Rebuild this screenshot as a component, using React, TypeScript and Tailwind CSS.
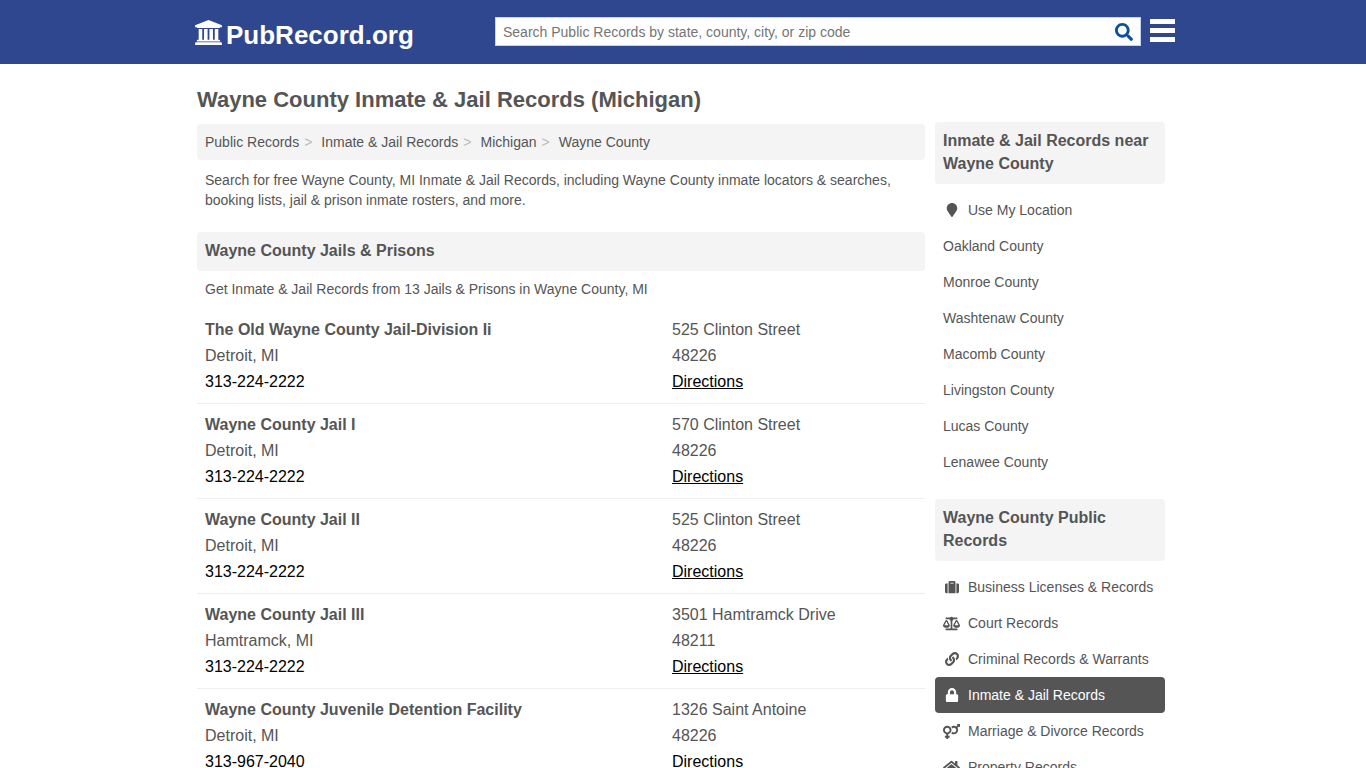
import type { IconType } from "react-icons";
import {
  FaBalanceScale,
  FaHome,
  FaLink,
  FaLock,
  FaMapMarker,
  FaSearch,
  FaSuitcase,
  FaVenusMars,
} from "react-icons/fa";

type Facility = {
  name: string;
  city: string;
  phone: string;
  street: string;
  zip: string;
};

type SideLink = {
  label: string;
  icon?: IconType;
  wide?: boolean;
  active?: boolean;
};

const crumbs = ["Public Records", "Inmate & Jail Records", "Michigan", "Wayne County"];

const facilities: Facility[] = [
  { name: "The Old Wayne County Jail-Division Ii", city: "Detroit, MI", phone: "313-224-2222", street: "525 Clinton Street", zip: "48226" },
  { name: "Wayne County Jail I", city: "Detroit, MI", phone: "313-224-2222", street: "570 Clinton Street", zip: "48226" },
  { name: "Wayne County Jail II", city: "Detroit, MI", phone: "313-224-2222", street: "525 Clinton Street", zip: "48226" },
  { name: "Wayne County Jail III", city: "Hamtramck, MI", phone: "313-224-2222", street: "3501 Hamtramck Drive", zip: "48211" },
  { name: "Wayne County Juvenile Detention Facility", city: "Detroit, MI", phone: "313-967-2040", street: "1326 Saint Antoine", zip: "48226" },
];

const nearby: SideLink[] = [
  { label: "Use My Location", icon: FaMapMarker },
  { label: "Oakland County" },
  { label: "Monroe County" },
  { label: "Washtenaw County" },
  { label: "Macomb County" },
  { label: "Livingston County" },
  { label: "Lucas County" },
  { label: "Lenawee County" },
];

const categories: SideLink[] = [
  { label: "Business Licenses & Records", icon: FaSuitcase },
  { label: "Court Records", icon: FaBalanceScale, wide: true },
  { label: "Criminal Records & Warrants", icon: FaLink },
  { label: "Inmate & Jail Records", icon: FaLock, active: true },
  { label: "Marriage & Divorce Records", icon: FaVenusMars, wide: true },
  { label: "Property Records", icon: FaHome, wide: true },
];

function CourthouseIcon() {
  return (
    <svg viewBox="0 0 1920 1792" className="h-[25px] w-[27px]" fill="currentColor" aria-hidden="true">
      <path d="M960 0l960 384v128h-128q0 26-20.5 45t-48.5 19h-1526q-28 0-48.5-19t-20.5-45h-128v-128zM256 640h256v768h128v-768h256v768h128v-768h256v768h128v-768h256v768h59q28 0 48.5 19t20.5 45v64h-1664v-64q0-26 20.5-45t48.5-19h59v-768zM1851 1600q28 0 48.5 19t20.5 45v128h-1920v-128q0-26 20.5-45t48.5-19h1782z" />
    </svg>
  );
}

function Header() {
  return (
    <header className="bg-[#2e478f]">
      <div className="mx-auto flex h-16 max-w-[984px] items-center justify-between pl-1">
        <a href="#" className="flex items-center gap-1 text-[26px] font-bold leading-8 text-white">
          <CourthouseIcon />
          <span className="pt-[6px]">PubRecord.org</span>
        </a>
        <div className="flex items-center gap-[9px] pb-[2px]">
          <form className="flex h-[29px] w-[646px] items-center border border-[#c5d3ee] bg-white pt-[2px]">
            <input
              type="text"
              aria-label="Search Public Records"
              placeholder="Search Public Records by state, county, city, or zip code"
              className="h-full min-w-0 flex-1 px-[7px] text-sm text-[#555] outline-none placeholder:text-[#757575]"
            />
            <button type="submit" aria-label="Search" className="px-[7px] text-[#0b50a0]">
              <FaSearch className="size-[18px]" />
            </button>
          </form>
          <button type="button" aria-label="Menu" className="flex w-[25px] flex-col gap-1 pb-[2px]">
            <span className="h-[5px] bg-white" />
            <span className="h-[5px] bg-white" />
            <span className="h-[5px] bg-white" />
          </button>
        </div>
      </div>
    </header>
  );
}

function Breadcrumbs() {
  return (
    <nav aria-label="Breadcrumb" className="rounded bg-[#f4f4f4] px-2 py-2">
      <ol className="flex text-sm">
        {crumbs.map((crumb, idx) => (
          <li key={crumb} className="flex">
            <a href="#">{crumb}</a>
            {idx < crumbs.length - 1 && <span className="pl-[5px] pr-[9px] text-[#bbb]">&gt;</span>}
          </li>
        ))}
      </ol>
    </nav>
  );
}

function FacilityRow({ facility }: { facility: Facility }) {
  return (
    <li className="flex border-b border-[#eee] px-2 py-2 text-base leading-[26px]">
      <div className="flex w-[467px] flex-col items-start">
        <a href="#" className="font-bold">
          {facility.name}
        </a>
        <span>{facility.city}</span>
        <a href="#" className="text-black">
          {facility.phone}
        </a>
      </div>
      <div className="flex flex-1 flex-col items-start">
        <span>{facility.street}</span>
        <span>{facility.zip}</span>
        <a href="#" className="text-black underline">
          Directions
        </a>
      </div>
    </li>
  );
}

function SideSection({ title, links }: { title: string; links: SideLink[] }) {
  return (
    <section>
      <h2 className="mb-2 rounded bg-[#f4f4f4] px-2 pb-[9px] pt-[7px] text-base font-bold leading-[23px]">{title}</h2>
      <ul className="text-sm">
        {links.map(({ label, icon: Icon, wide, active }) => (
          <li key={label}>
            <a
              href="#"
              className={
                active
                  ? "flex items-center gap-2 rounded bg-[#555] px-2 py-2 text-white"
                  : "flex items-center gap-2 rounded px-2 py-2"
              }
            >
              {Icon && (
                <span className="flex w-[17px] justify-center">
                  <Icon className={wide ? "size-[17px]" : "size-[14px]"} />
                </span>
              )}
              {label}
            </a>
          </li>
        ))}
      </ul>
    </section>
  );
}

export default function App() {
  return (
    <div className="min-h-screen bg-white font-['Liberation_Sans',Arial,sans-serif] text-[#555]">
      <Header />
      <div className="mx-auto flex max-w-[980px] gap-[10px] pl-1 pr-2">
        <main className="min-w-0 flex-1 pt-[21px]">
          <h1 className="mb-[9px] text-[22px] font-bold leading-[30px]">
            Wayne County Inmate &amp; Jail Records (Michigan)
          </h1>
          <Breadcrumbs />
          <p className="px-2 pt-[10px] text-sm">
            Search for free Wayne County, MI Inmate &amp; Jail Records, including Wayne County inmate locators &amp;
            searches, booking lists, jail &amp; prison inmate rosters, and more.
          </p>
          <h2 className="mt-[22px] rounded bg-[#f4f4f4] px-2 pb-[9px] pt-[7px] text-base font-bold leading-[23px]">
            Wayne County Jails &amp; Prisons
          </h2>
          <p className="px-2 py-2 text-sm">Get Inmate &amp; Jail Records from 13 Jails &amp; Prisons in Wayne County, MI</p>
          <ul className="mt-[2px]">
            {facilities.map((facility) => (
              <FacilityRow key={facility.name} facility={facility} />
            ))}
          </ul>
        </main>
        <aside className="flex w-[230px] shrink-0 flex-col gap-[19px] pt-[58px]">
          <SideSection title="Inmate & Jail Records near Wayne County" links={nearby} />
          <SideSection title="Wayne County Public Records" links={categories} />
        </aside>
      </div>
    </div>
  );
}
